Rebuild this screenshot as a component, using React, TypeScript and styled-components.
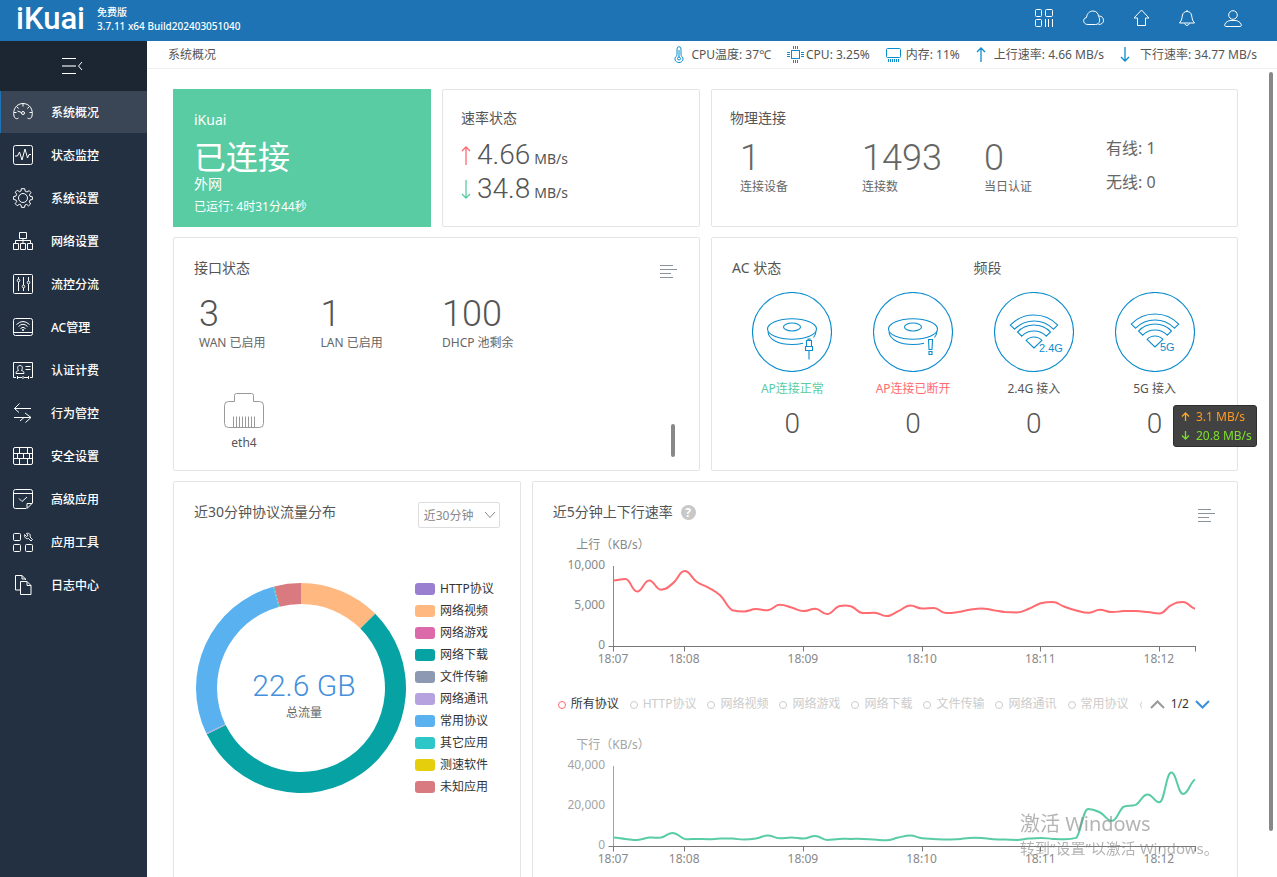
import React, { useLayoutEffect, useRef, useState } from "react";
import styled, { createGlobalStyle } from "styled-components";

const GlobalStyle = createGlobalStyle`
  *, *::before, *::after { box-sizing: border-box; }
  body {
    margin: 0;
    background: #fff;
    color: #555;
    font-family: "Noto Sans", "Noto Sans CJK SC", sans-serif;
    font-size: 12px;
    line-height: 18px;
  }
  button, select { font: inherit; color: inherit; }
  button { padding: 0; border: 0; background: none; cursor: pointer; }
  h2, h3, p, ul, dl, dd, dt { margin: 0; padding: 0; font-weight: 400; }
  svg { display: block; flex: none; }
`;

/* ---------- shell ---------- */

const Shell = styled.div`
  display: flex;
  flex-direction: column;
  height: 100vh;
  overflow: hidden;
`;

const Header = styled.header`
  display: flex;
  flex: none;
  height: 41px;
  padding: 0 35px 0 16px;
  background: #1d73b3;
  color: #fff;
`;

const Logo = styled.a`
  width: 81px;
  color: #fff;
  font: 500 31px/38px Roboto, sans-serif;
  text-decoration: none;
`;

const Version = styled.div`
  padding-top: 5px;
  font-size: 10px;
  font-weight: 500;
  line-height: 14px;
`;

const HeaderActions = styled.nav`
  display: flex;
  align-items: center;
  gap: 29px;
  height: 36px;
  margin-left: auto;
`;

const Body = styled.div`
  display: flex;
  flex: 1;
  min-height: 0;
`;

const Sidebar = styled.aside`
  flex: none;
  width: 147px;
  background: #223041;
  color: #fff;
`;

const Collapse = styled.button`
  display: flex;
  align-items: center;
  justify-content: center;
  width: 100%;
  height: 50px;
  padding-right: 3px;
  background: #1c2633;
  color: #fff;
`;

const Menu = styled.ul`
  display: flex;
  flex-direction: column;
  gap: 1px;
  list-style: none;
`;

const MenuLink = styled.a<{ $active?: boolean }>`
  display: flex;
  align-items: center;
  gap: 18px;
  height: 42px;
  padding-left: 12px;
  border-left: 1px solid ${(p) => (p.$active ? "#1d73b3" : "transparent")};
  background: ${(p) => (p.$active ? "#3a4655" : "transparent")};
  color: #fff;
  font-weight: 500;
  line-height: 20px;
  text-decoration: none;

  span { padding-top: 2px; }
`;

const Main = styled.main`
  position: relative;
  display: flex;
  flex: 1;
  flex-direction: column;
  min-width: 0;
`;

const TopBar = styled.div`
  display: flex;
  flex: none;
  align-items: center;
  justify-content: space-between;
  height: 28px;
  padding: 0 20px 0 21px;
  border-bottom: 1px solid #f0f0f0;
`;

const Stats = styled.div`
  display: flex;
  gap: 16px;
`;

const Stat = styled.span<{ $gap: number }>`
  display: flex;
  align-items: center;
  gap: ${(p) => p.$gap}px;
  white-space: nowrap;
`;

const Scroller = styled.div`
  flex: 1;
  min-height: 0;
  overflow: hidden;
`;

const Dashboard = styled.div`
  display: grid;
  grid-template-columns: repeat(12, minmax(0, 1fr));
  gap: 10px 11px;
  padding: 20px 39px 20px 26px;
`;

const PageThumb = styled.div`
  position: absolute;
  top: 31px;
  right: 4px;
  bottom: 46px;
  width: 4px;
  border-radius: 2px;
  background: #888;
`;

/* ---------- cards ---------- */

const Card = styled.section<{ $span: number; $pad: string }>`
  position: relative;
  grid-column: span ${(p) => p.$span};
  padding: ${(p) => p.$pad};
  border: 1px solid #e4e4e4;
  border-radius: 2px;
  background: #fff;
`;

const WanCard = styled(Card)`
  border-color: #59cca3;
  border-radius: 0;
  background: #59cca3;
  color: #fff;
`;

const CardHead = styled.div<{ $pad?: string }>`
  display: flex;
  align-items: flex-start;
  justify-content: space-between;
  height: 20px;
  padding: ${(p) => p.$pad || "0"};
`;

const Title = styled.h2`
  display: flex;
  align-items: center;
  gap: 8px;
  font-size: 14px;
  line-height: 20px;
`;

const ListButton = styled.button`
  padding-top: 7px;
  color: #8a939c;
`;

const BigState = styled.p`
  margin-top: 10px;
  font-size: 32px;
  line-height: 34px;
`;

const WanName = styled.p`
  font-size: 14px;
  line-height: 20px;
`;

const Uptime = styled.p`
  margin-top: 3px;
  line-height: 20px;
`;

const Rates = styled.div`
  margin-top: 10px;
`;

const Rate = styled.p`
  display: flex;
  align-items: center;
  height: 34px;
  font-size: 14px;
  line-height: 20px;
`;

const RateRow = styled.span`
  display: flex;
  align-items: baseline;
  gap: 4px;
  padding-left: 6px;
`;

const Figure = styled.span<{ $size: number; $line: number }>`
  font-family: Roboto, "Noto Sans", sans-serif;
  font-size: ${(p) => p.$size}px;
  font-weight: 300;
  line-height: ${(p) => p.$line}px;
`;

const LinkGrid = styled.div`
  display: grid;
  grid-template-columns: repeat(4, minmax(0, 1fr));
  margin-top: 3px;
  padding-left: 10px;
  color: #666;
`;

const Counter = styled.dl<{ $top?: number }>`
  display: flex;
  flex-direction: column-reverse;
  justify-content: flex-end;
  padding-top: ${(p) => p.$top || 0}px;
  white-space: nowrap;

  dt { color: #666; }
  dd { display: flex; height: 40px; }
`;

const Medium = styled.div`
  font-size: 16px;
  line-height: 34px;
`;

const PortGrid = styled.div`
  display: grid;
  grid-template-columns: repeat(4, minmax(0, 1fr));
  margin-top: 16px;
  padding-left: 5px;
`;

const Port = styled.div`
  display: flex;
  flex-direction: column;
  align-items: center;
  gap: 6px;
  width: 90px;
  margin: 41px 0 18px 5px;
`;

const InnerThumb = styled.div`
  position: absolute;
  right: 24px;
  bottom: 13px;
  width: 4px;
  height: 33px;
  border-radius: 2px;
  background: #888;
`;

const TitlePair = styled.div`
  display: grid;
  grid-template-columns: 1fr 1fr;
`;

const ApGrid = styled.div`
  display: grid;
  grid-template-columns: repeat(4, minmax(0, 1fr));
  margin-top: 14px;
`;

const Ap = styled.div<{ $color?: string }>`
  display: flex;
  flex-direction: column;
  align-items: center;

  h3 {
    margin: 8px 0;
    color: ${(p) => p.$color || "#555"};
    font-size: 12px;
    line-height: 18px;
  }
`;

/* ---------- protocol share ---------- */

const Picker = styled.label`
  position: relative;

  select {
    width: 82px;
    height: 26px;
    padding: 2px 0 0 5px;
    border: 1px solid #ddd;
    border-radius: 2px;
    background: #fff;
    color: #888;
    appearance: none;
  }

  svg {
    position: absolute;
    top: 9px;
    right: 4px;
    color: #888;
    pointer-events: none;
  }
`;

const Share = styled.div`
  display: flex;
  align-items: center;
  gap: 9px;
  margin-top: 56px;
  padding-left: 2px;
`;

const ShareLegend = styled.ul`
  list-style: none;
  color: #333;
`;

const ShareItem = styled.li<{ $color: string }>`
  display: flex;
  align-items: center;
  gap: 5px;
  height: 22px;
  white-space: nowrap;

  &::before {
    content: "";
    width: 20px;
    height: 12px;
    border-radius: 3px;
    background: ${(p) => p.$color};
  }
`;

/* ---------- rate chart ---------- */

const Help = styled.button`
  width: 15px;
  height: 15px;
  border-radius: 50%;
  background: #c8c8c8;
  color: #fff;
  font-size: 12px;
  font-weight: 700;
  line-height: 15px;
`;

const ChartBox = styled.div`
  height: 140px;

  svg { font-size: 12px; }
`;

const Charts = styled.div`
  padding-top: 12px;
`;

const Series = styled.div`
  display: flex;
  align-items: center;
  height: 24px;
  margin: 18px 27px 18px 25px;
`;

const SeriesList = styled.div`
  display: flex;
  flex: 1;
  gap: 11px;
  min-width: 0;
  overflow: hidden;
`;

const SeriesButton = styled.button<{ $on?: boolean }>`
  display: flex;
  flex: none;
  align-items: center;
  gap: 5px;
  color: ${(p) => (p.$on ? "#333" : "#ccc")};

  &::before {
    content: "";
    width: 8px;
    height: 8px;
    margin-top: 2px;
    border: 1px solid ${(p) => (p.$on ? "#ff6b70" : "#ccc")};
    border-radius: 50%;
  }
`;

const Pager = styled.div`
  display: flex;
  align-items: center;
  gap: 6px;
  padding-left: 8px;
  color: #333;
`;

/* ---------- overlays ---------- */

const SpeedWidget = styled.div`
  position: fixed;
  top: 405px;
  right: 20px;
  width: 84px;
  height: 42px;
  padding: 1px 0 1px 7px;
  border: 1px solid #2e2e2e;
  border-radius: 3px;
  background: rgba(50, 50, 50, 0.92);
`;

const SpeedLine = styled.div<{ $color: string }>`
  display: flex;
  align-items: center;
  gap: 6px;
  height: 19px;
  color: ${(p) => p.$color};
  white-space: nowrap;
`;

const Activation = styled.div`
  position: fixed;
  right: 55px;
  bottom: 16px;
  width: 202px;
  color: rgba(130, 130, 130, 0.6);
  font-size: 15px;
  line-height: 26px;
  white-space: nowrap;
  pointer-events: none;

  p:first-child { font-size: 20px; line-height: 22px; }
`;

/* ---------- icons ---------- */

type IconProps = { w: number; h: number; children: React.ReactNode; color?: string; sw?: number };

const Icon = ({ w, h, children, color = "currentColor", sw = 1 }: IconProps) => (
  <svg width={w} height={h} viewBox={`0 0 ${w} ${h}`} fill="none" stroke={color} strokeWidth={sw} aria-hidden="true">
    {children}
  </svg>
);

const blue = "#0c8ccd";

const ArrowIcon = ({ w, h, color, down }: { w: number; h: number; color: string; down?: boolean }) => {
  const c = w / 2;
  return (
    <Icon w={w} h={h} color={color} sw={1.3}>
      {down ? (
        <path d={`M${c} 0V${h - 1}M1 ${h - c}L${c} ${h - 1}L${w - 1} ${h - c}`} />
      ) : (
        <path d={`M${c} ${h}V1M1 ${c}L${c} 1L${w - 1} ${c}`} />
      )}
    </Icon>
  );
};

const ListIcon = () => (
  <Icon w={17} h={14}>
    <path d="M0 .5H13M0 4.5H17M0 8.5H11M0 12.5H13" />
  </Icon>
);

const menu = [
  { label: "系统概况", icon: <><path d="M5.500 16C3.500 17.500 1.800 16.500 1 14C-.500 7.500 3.500 1.500 10 1.500S20.500 7.500 19 14C18.200 16.500 16.500 17.500 14.500 16" /><path d="M10 1.500V4.500M3.700 4.700L5.700 6.500M16.300 4.700L14.300 6.500M1 10.500H3.500M19 10.500H16.500M4.500 9L8.500 10.500" /><circle cx="10" cy="11" r="1.500" /></> },
  { label: "状态监控", icon: <><rect x=".5" y=".5" width="19" height="19" rx="2" /><path d="M2 11H4.500L6.500 7L9 15L12 4L14.500 13L16 9.500L18 9.500" /></> },
  { label: "系统设置", icon: <><circle cx="10" cy="10" r="4.500" /><path d="M8.300 .7H11.700L12.200 3.200L14 4L16.200 2.600L18 4.600L16.500 6.700L17 8.300L19.400 8.800V11.500L17 12L16.300 13.800L17.600 16L15.600 17.900L13.600 16.400L12 17L11.500 19.400H8.500L8 17L6.300 16.300L4.200 17.700L2.200 15.700L3.700 13.600L3 12L.6 11.500V8.600L3 8L3.700 6.300L2.300 4.200L4.300 2.200L6.400 3.700L8 3Z" /></> },
  { label: "网络设置", icon: <path d="M6.500 1.500H13.500V7.500H6.500ZM.5 12.500H5.500V18.500H.5ZM7.500 12.500H12.500V18.500H7.500ZM14.500 12.500H19.500V18.500H14.500ZM10 7.500V12.500M2.500 12.500V9.500H17.500V12.500" /> },
  { label: "流控分流", icon: <><rect x=".5" y=".5" width="19" height="19" rx="1" /><path d="M5.500 3V5M5.500 8V17M10.500 3V11M10.500 14V17M15.500 3V7M15.500 10V17" /><circle cx="5.500" cy="6.500" r="1.300" /><circle cx="10.500" cy="12.500" r="1.300" /><circle cx="15.500" cy="8.500" r="1.300" /></> },
  { label: "AC管理", icon: <><rect x=".5" y="1.500" width="19" height="17" rx="2" /><path d="M.5 15.500H19.500M3.500 7.500Q10 1.500 16.500 7.500M5.500 9.500Q10 5 14.500 9.500M7.500 11.500Q10 9 12.500 11.500" /><circle cx="10" cy="13" r=".7" /></> },
  { label: "认证计费", icon: <path d="M3 17.500H.5V2.500H19.500V17.500H17M5 17.500H9M11 17.500H15M4.500 16V19M10 16V19M15.500 16V19M12.500 6.500H17.500M12.500 9.500H17.500M3 13.500C3 11.500 4 11 5.500 10.500C4 8 4.500 5.500 7 5.500S10 8 8.500 10.500C10 11 11 11.500 11 13.500Z" /> },
  { label: "行为管控", icon: <path d="M18 5.500H1.500M6.500 .5L1.500 5.500L6 9.500M1 14.500H18M12 10L18 14.500L12.500 19.500M7 18L11 14.500" /> },
  { label: "安全设置", icon: <><rect x=".5" y="1.500" width="19" height="17" rx="1.500" /><path d="M.5 7.500H19.500M.5 12.500H19.500M6.500 1.500V7.500M14.500 1.500V7.500M4.500 7.500V12.500M10.500 7.500V12.500M16.500 7.500V12.500M6.500 12.500V18.500M14.500 12.500V18.500" /></> },
  { label: "高级应用", icon: <path d="M13 19.500H2.500Q.5 19.500 .5 17.500V2.500Q.5 .5 2.500 .5H17.500Q19.500 .5 19.500 2.500V14L14 19.500V14.500H19M.5 4.500H19.500M6 9.500L9 12.500L14 8" /> },
  { label: "应用工具", icon: <><rect x=".5" y="1.500" width="7" height="7" rx="1" /><rect x=".5" y="12.500" width="7" height="7" rx="1" /><rect x="12.500" y="12.500" width="7" height="7" rx="1" /><path d="M11.500 2.500L13.500 4.500L15 3.500L13.500 1.500C16 .5 18 2.500 17 5L19.500 7.500L18 9L15.500 6.500C13 7.500 11 5 11.500 2.500Z" /></> },
  { label: "日志中心", icon: <path d="M7 15H2.500V.5H9L12.500 4V5M9 .5V4H12.500M7.500 6.500H14L18 10.500V19.500H7.500ZM14 6.500V10.500H18" /> },
];

/* ---------- data ---------- */

const slices = [
  { color: "#ffb980", from: 0, to: 45 },
  { color: "#07a2a4", from: 45, to: 243.8 },
  { color: "#b6a2de", from: 243.8, to: 244.4 },
  { color: "#5ab1ef", from: 244.4, to: 344.6 },
  { color: "#2ec7c9", from: 344.6, to: 345.2 },
  { color: "#d87a80", from: 345.2, to: 360 },
];

const protocols = [
  ["HTTP协议", "#9a7fd1"],
  ["网络视频", "#ffb980"],
  ["网络游戏", "#dc69aa"],
  ["网络下载", "#07a2a4"],
  ["文件传输", "#8d98b3"],
  ["网络通讯", "#b6a2de"],
  ["常用协议", "#5ab1ef"],
  ["其它应用", "#2ec7c9"],
  ["测速软件", "#e5cf0d"],
  ["未知应用", "#d87a80"],
];

const upload = [
  8260, 8430, 6860, 8260, 7100, 7890, 9420, 8100, 7350, 6360, 4540, 4380, 4670, 4540, 5210, 4880, 4420, 4710, 4050,
  5040, 5040, 4170, 4210, 3800, 4420, 5120, 4750, 4830, 4170, 4300, 4590, 4750, 4540, 4300, 4260, 4710, 5410, 5580,
  4960, 4500, 4210, 4590, 4300, 4420, 4420, 4300, 4130, 5170, 5580, 4710,
];

const download = [
  4460, 3800, 3300, 4460, 4460, 6770, 3800, 3800, 3630, 3960, 3960, 3470, 3960, 5450, 4130, 4460, 3960, 5280, 3300,
  3800, 3800, 3800, 3470, 3140, 4460, 5450, 4130, 3800, 3470, 3630, 4290, 4290, 3630, 3470, 3300, 3960, 4290, 3800,
  3630, 4290, 18800, 17000, 12870, 19970, 20800, 26070, 22110, 36960, 26240, 33500,
];

const ticks: [number, string][] = [
  [0, "18:07"],
  [6, "18:08"],
  [16, "18:09"],
  [26, "18:10"],
  [36, "18:11"],
  [46, "18:12"],
  [49, ""],
];

/* ---------- charts ---------- */

const polar = (cx: number, cy: number, r: number, deg: number) => {
  const a = (deg * Math.PI) / 180;
  return `${(cx + r * Math.sin(a)).toFixed(2)} ${(cy - r * Math.cos(a)).toFixed(2)}`;
};

const ring = (cx: number, cy: number, outer: number, inner: number, from: number, to: number) => {
  const large = to - from > 180 ? 1 : 0;
  return `M${polar(cx, cy, outer, from)}A${outer} ${outer} 0 ${large} 1 ${polar(cx, cy, outer, to)}L${polar(cx, cy, inner, to)}A${inner} ${inner} 0 ${large} 0 ${polar(cx, cy, inner, from)}Z`;
};

const Donut = () => (
  <svg width="210" height="210" viewBox="0 0 210 210" role="img" aria-label="协议流量分布">
    {slices.map((s) => (
      <path key={s.from} d={ring(105, 105, 105, 84, s.from, s.to)} fill={s.color} />
    ))}
    <text x="108" y="113" textAnchor="middle" fill="#4590dc" fontFamily="Roboto" fontWeight="300" fontSize="30">
      22.6 GB
    </text>
    <text x="108" y="134" textAnchor="middle" fill="#666" fontSize="12">
      总流量
    </text>
  </svg>
);

/* Smooth curve: flat at every peak and trough, so that it never overshoots the data. */
const smoothPath = (pts: [number, number][]) => {
  const clamp = (v: number, a: number, b: number) => Math.min(Math.max(v, Math.min(a, b)), Math.max(a, b));
  const slope = pts.map((p, i) => {
    const a = pts[i - 1] || p;
    const b = pts[i + 1] || p;
    return (b[1] - p[1]) * (p[1] - a[1]) < 0 ? 0 : (b[1] - a[1]) / 2;
  });
  let d = `M${pts[0].join(" ")}`;
  for (let i = 0; i < pts.length - 1; i++) {
    const [x0, y0] = pts[i];
    const [x1, y1] = pts[i + 1];
    const h = (x1 - x0) * 0.45;
    const flat = Math.abs(y1 - y0) < 0.5;
    const c0 = flat ? y0 + slope[i] * 0.3 : clamp(y0 + slope[i] * 0.45, y0, y1);
    const c1 = flat ? y1 - slope[i + 1] * 0.3 : clamp(y1 - slope[i + 1] * 0.45, y0, y1);
    d += `C${(x0 + h).toFixed(1)} ${c0.toFixed(1)} ${(x1 - h).toFixed(1)} ${c1.toFixed(1)} ${x1.toFixed(1)} ${y1.toFixed(1)}`;
  }
  return d;
};

type ChartProps = { name: string; data: number[]; max: number; color: string; ink: string; labels: string[] };

const LineChart = ({ name, data, max, color, ink, labels }: ChartProps) => {
  const box = useRef<HTMLDivElement>(null);
  const [width, setWidth] = useState(704);
  useLayoutEffect(() => {
    const el = box.current;
    if (!el) return;
    const measure = () => setWidth(Math.round(el.clientWidth));
    measure();
    const ro = new ResizeObserver(measure);
    ro.observe(el);
    return () => ro.disconnect();
  }, []);
  const left = 80.5;
  const step = (width - 42 - left) / (data.length - 1);
  const base = 112.5;
  const snap = (v: number) => Math.floor(v) + 0.5;
  const pts = data.map((v, i): [number, number] => [left + i * step, base - (v / max) * 80]);
  return (
    <ChartBox ref={box}>
      <svg width={width} height="140" role="img" aria-label={name}>
        <text x="80" y="15" textAnchor="middle" fill={ink}>{name}</text>
        {labels.map((l, i) => (
          <text key={l} x="72" y={35 + i * 40} textAnchor="end" fill={ink}>{l}</text>
        ))}
        <path d={`M${left} 32V${base}`} stroke={ink} />
        <path d={`M${left - 5} ${base}H${width - 41}`} stroke="#777" />
        {ticks.map(([i, label]) => (
          <g key={i}>
            <path d={`M${snap(left + i * step)} ${base}v5`} stroke="#777" />
            <text x={left + i * step - 0.5} y="129" textAnchor="middle" fill="#888">{label}</text>
          </g>
        ))}
        <path d={smoothPath(pts)} fill="none" stroke={color} strokeWidth="2" />
      </svg>
    </ChartBox>
  );
};

const Disc = ({ children }: { children: React.ReactNode }) => (
  <Icon w={80} h={80} color={blue} sw={1.1}>
    <circle cx="40" cy="40" r="39.500" />
    {children}
  </Icon>
);

const Router = () => (
  <>
    <ellipse cx="40" cy="37" rx="24.500" ry="10.300" />
    <ellipse cx="40" cy="35" rx="8.500" ry="4" />
    <path d="M16 40C17 48 27 52.500 40 52.500Q46 52.500 51 51.300M64 39.500Q63.500 43 61.500 45.500" />
  </>
);

const Wifi = ({ cy }: { cy: number }) => (
  <>
    <path d={ring(40, cy, 33, 27, -46, 46)} />
    <path d={ring(40, cy, 23, 17, -46, 46)} />
    <path d={`M40 ${cy}L${polar(40, cy, 11, -46)}A11 11 0 0 1 ${polar(40, cy, 11, 46)}Z`} strokeLinejoin="round" />
  </>
);

const DiscText = ({ x, y, children }: { x: number; y: number; children: string }) => (
  <text x={x} y={y} fill={blue} stroke="none" fontFamily="Liberation Sans" fontSize="11">{children}</text>
);

const CounterItem = ({ value, label, top }: { value: string; label: string; top?: number }) => (
  <Counter $top={top}>
    <dt>{label}</dt>
    <dd><Figure $size={36} $line={40}>{value}</Figure></dd>
  </Counter>
);

/* ---------- page ---------- */

export default function App() {
  return (
    <Shell>
      <GlobalStyle />
      <Header>
        <Logo href="#">iKuai</Logo>
        <Version>
          <div>免费版</div>
          <div>3.7.11 x64 Build202403051040</div>
        </Version>
        <HeaderActions>
          <button aria-label="应用">
            <Icon w={20} h={20}>
              <rect x="1.500" y="1.500" width="6" height="7" rx="1" />
              <rect x="11.500" y="1.500" width="7" height="7" rx="1" />
              <rect x="1.500" y="11.500" width="6" height="7" rx="1" />
              <path d="M11.500 11V19M14.500 11V19M18.500 11V19" />
            </Icon>
          </button>
          <button aria-label="云平台">
            <Icon w={21} h={16}>
              <path d="M5 14.500C-.5 14.500-.5 8 3.500 7.500C4 3 7 1 10 1C13.500 1 15.500 3.500 15.500 6.500C17.500 9 17 14.500 12.500 14.500ZM16 6C19 6 20.500 8 20.500 10.500S18.500 14.500 15.500 14.500" />
            </Icon>
          </button>
          <button aria-label="升级">
            <Icon w={17} h={18}>
              <path d="M8.500 1L1 9H4.500V16.500H12.500V9H16Z" strokeLinejoin="round" />
            </Icon>
          </button>
          <button aria-label="通知">
            <Icon w={16} h={18}>
              <path d="M8 1V2.500M.5 14H15.500L13.500 11C13 9 13 8 12.500 6C12 3.500 10 2.500 8 2.500S4 3.500 3.500 6C3 8 3 9 2.500 11ZM5.500 14.500Q8 18.500 10.500 14.500" strokeLinejoin="round" />
            </Icon>
          </button>
          <button aria-label="用户">
            <Icon w={18} h={17}>
              <circle cx="9" cy="5" r="4.300" />
              <path d="M2 16.500C.5 16.500.5 15 1 14C2 12 4 11 6 10.500H12C14 11 16 12 17 14C17.500 15 17.500 16.500 16 16.500Z" />
            </Icon>
          </button>
        </HeaderActions>
      </Header>

      <Body>
        <Sidebar>
          <Collapse aria-label="收起菜单">
            <Icon w={21} h={17}>
              <path d="M0 .5H14M0 15.500H14M20 4L16.500 8L20 12" />
              <path d="M0 8H14" strokeWidth="2" opacity=".55" />
            </Icon>
          </Collapse>
          <Menu>
            {menu.map((m, i) => (
              <li key={m.label}>
                <MenuLink href="#" $active={i === 0}>
                  <Icon w={20} h={20}>{m.icon}</Icon>
                  <span>{m.label}</span>
                </MenuLink>
              </li>
            ))}
          </Menu>
        </Sidebar>

        <Main>
          <TopBar>
            <span>系统概况</span>
            <Stats>
              <Stat $gap={7}>
                <Icon w={10} h={17} color={blue}>
                  <path d="M3 9.500V3Q3 .7 5 .7T7 3V9.500C11 12.500 8.500 16.500 5 16.500S-1 12.500 3 9.500ZM5 4V11" />
                  <circle cx="5" cy="12.500" r="1.500" />
                </Icon>
                CPU温度: 37℃
              </Stat>
              <Stat $gap={2}>
                <Icon w={17} h={17} color={blue}>
                  <rect x="4.500" y="4.500" width="8" height="8" />
                  <path d="M6.500 0V3M8.500 0V3M10.500 0V3M6.500 14V17M8.500 14V17M10.500 14V17M0 6.500H3M0 8.500H3M0 10.500H3M14 6.500H17M14 8.500H17M14 10.500H17" />
                </Icon>
                CPU: 3.25%
              </Stat>
              <Stat $gap={5}>
                <Icon w={15} h={14} color={blue}>
                  <rect x=".5" y=".5" width="14" height="9" rx="1" />
                  <path d="M2.500 11V14M4.500 11V14M6.500 11V14M8.500 11V14M10.500 11V14M12.500 11V14" />
                </Icon>
                内存: 11%
              </Stat>
              <Stat $gap={8}>
                <ArrowIcon w={10} h={15} color={blue} />
                上行速率: 4.66 MB/s
              </Stat>
              <Stat $gap={10}>
                <ArrowIcon w={10} h={15} color={blue} down />
                下行速率: 34.77 MB/s
              </Stat>
            </Stats>
          </TopBar>

          <Scroller>
            <Dashboard>
              <WanCard $span={3} $pad="20px 20px 9px">
                <Title>iKuai</Title>
                <BigState>已连接</BigState>
                <WanName>外网</WanName>
                <Uptime>已运行: 4时31分44秒</Uptime>
              </WanCard>

              <Card $span={3} $pad="18px">
                <Title>速率状态</Title>
                <Rates>
                  <Rate>
                    <ArrowIcon w={10} h={19} color="#ff6b70" />
                    <RateRow><Figure $size={28} $line={34}>4.66</Figure>MB/s</RateRow>
                  </Rate>
                  <Rate>
                    <ArrowIcon w={10} h={19} color="#59cca3" down />
                    <RateRow><Figure $size={28} $line={34}>34.8</Figure>MB/s</RateRow>
                  </Rate>
                </Rates>
              </Card>

              <Card $span={6} $pad="18px 9px 18px 18px">
                <Title>物理连接</Title>
                <LinkGrid>
                  <CounterItem value="1" label="连接设备" top={7} />
                  <CounterItem value="1493" label="连接数" top={7} />
                  <CounterItem value="0" label="当日认证" top={7} />
                  <Medium>
                    <div>有线: 1</div>
                    <div>无线: 0</div>
                  </Medium>
                </LinkGrid>
              </Card>

              <Card $span={6} $pad="20px 14px 0 20px">
                <CardHead $pad="0 8px 0 0">
                  <Title>接口状态</Title>
                  <ListButton aria-label="接口列表"><ListIcon /></ListButton>
                </CardHead>
                <PortGrid>
                  <CounterItem value="3" label="WAN 已启用" />
                  <CounterItem value="1" label="LAN 已启用" />
                  <CounterItem value="100" label="DHCP 池剩余" />
                </PortGrid>
                <Port>
                  <Icon w={40} h={35} color="#999">
                    <path d="M10.500 8.500V2.500Q10.500 .5 12.500 .5H27.500Q29.500 .5 29.500 2.500V8.500H35.500Q39.500 8.500 39.500 12.500V30.500Q39.500 34.500 35.500 34.500H4.500Q.5 34.500 .5 30.500V12.500Q.5 8.500 4.500 8.500Z" />
                    <path d="M9.500 23.500V34M12.500 23.500V34M15.500 23.500V34M18.500 23.500V34M21.500 23.500V34M24.500 23.500V34M27.500 23.500V34M30.500 23.500V34" />
                  </Icon>
                  eth4
                </Port>
                <InnerThumb />
              </Card>

              <Card $span={6} $pad="20px 22px 20px 20px">
                <TitlePair>
                  <Title>AC 状态</Title>
                  <Title>频段</Title>
                </TitlePair>
                <ApGrid>
                  <Ap $color="#59cca3">
                    <Disc>
                      <Router />
                      <path d="M53.500 54.500V58.500H60.500V54.500ZM54.500 54.500V48.500H59.500V54.500M57 58.500V67.500M56 48V47H58V48" />
                    </Disc>
                    <h3>AP连接正常</h3>
                    <Figure $size={28} $line={36}>0</Figure>
                  </Ap>
                  <Ap $color="#ff6b70">
                    <Disc>
                      <Router />
                      <path d="M55.500 47.500H59.500L59 57.500H56ZM56 59.500H59V62.500H56Z" />
                    </Disc>
                    <h3>AP连接已断开</h3>
                    <Figure $size={28} $line={36}>0</Figure>
                  </Ap>
                  <Ap>
                    <Disc>
                      <Wifi cy={56} />
                      <DiscText x={45} y={60}>2.4G</DiscText>
                    </Disc>
                    <h3>2.4G 接入</h3>
                    <Figure $size={28} $line={36}>0</Figure>
                  </Ap>
                  <Ap>
                    <Disc>
                      <Wifi cy={55} />
                      <DiscText x={45} y={59}>5G</DiscText>
                    </Disc>
                    <h3>5G 接入</h3>
                    <Figure $size={28} $line={36}>0</Figure>
                  </Ap>
                </ApGrid>
              </Card>

              <Card $span={4} $pad="20px">
                <CardHead>
                  <Title>近30分钟协议流量分布</Title>
                  <Picker>
                    <select aria-label="统计时段" defaultValue="30">
                      <option value="30">近30分钟</option>
                    </select>
                    <Icon w={12} h={8}>
                      <path d="M1 1L6 6.500L11 1" />
                    </Icon>
                  </Picker>
                </CardHead>
                <Share>
                  <Donut />
                  <ShareLegend>
                    {protocols.map(([name, color]) => (
                      <ShareItem key={name} $color={color}>{name}</ShareItem>
                    ))}
                  </ShareLegend>
                </Share>
              </Card>

              <Card $span={8} $pad="20px 0">
                <CardHead $pad="0 22px 0 20px">
                  <Title>
                    近5分钟上下行速率
                    <Help aria-label="帮助">?</Help>
                  </Title>
                  <ListButton aria-label="速率列表"><ListIcon /></ListButton>
                </CardHead>
                <Charts>
                  <LineChart name="上行（KB/s）" data={upload} max={10000} color="#ff6b70" ink="#888" labels={["10,000", "5,000", "0"]} />
                  <Series>
                    <SeriesList>
                      <SeriesButton $on>所有协议</SeriesButton>
                      {protocols.slice(0, 7).map(([name]) => (
                        <SeriesButton key={name}>{name}</SeriesButton>
                      ))}
                      <SeriesButton aria-label="其它应用" />
                    </SeriesList>
                    <Pager>
                      <button aria-label="上一页">
                        <Icon w={15} h={9} color="#999" sw={2}><path d="M1 8L7.500 1.500L14 8" /></Icon>
                      </button>
                      1/2
                      <button aria-label="下一页">
                        <Icon w={15} h={9} color="#3b8fdc" sw={2}><path d="M1 1L7.500 7.500L14 1" /></Icon>
                      </button>
                    </Pager>
                  </Series>
                  <LineChart name="下行（KB/s）" data={download} max={40000} color="#59cca3" ink="#a4a4a4" labels={["40,000", "20,000", "0"]} />
                </Charts>
              </Card>
            </Dashboard>
          </Scroller>
          <PageThumb />
        </Main>
      </Body>

      <SpeedWidget>
        <SpeedLine $color="#ff9a1f"><ArrowIcon w={9} h={9} color="#ffa826" />3.1 MB/s</SpeedLine>
        <SpeedLine $color="#7be02c"><ArrowIcon w={9} h={9} color="#7be02c" down />20.8 MB/s</SpeedLine>
      </SpeedWidget>

      <Activation>
        <p>激活 Windows</p>
        <p>转到“设置”以激活 Windows。</p>
      </Activation>
    </Shell>
  );
}
